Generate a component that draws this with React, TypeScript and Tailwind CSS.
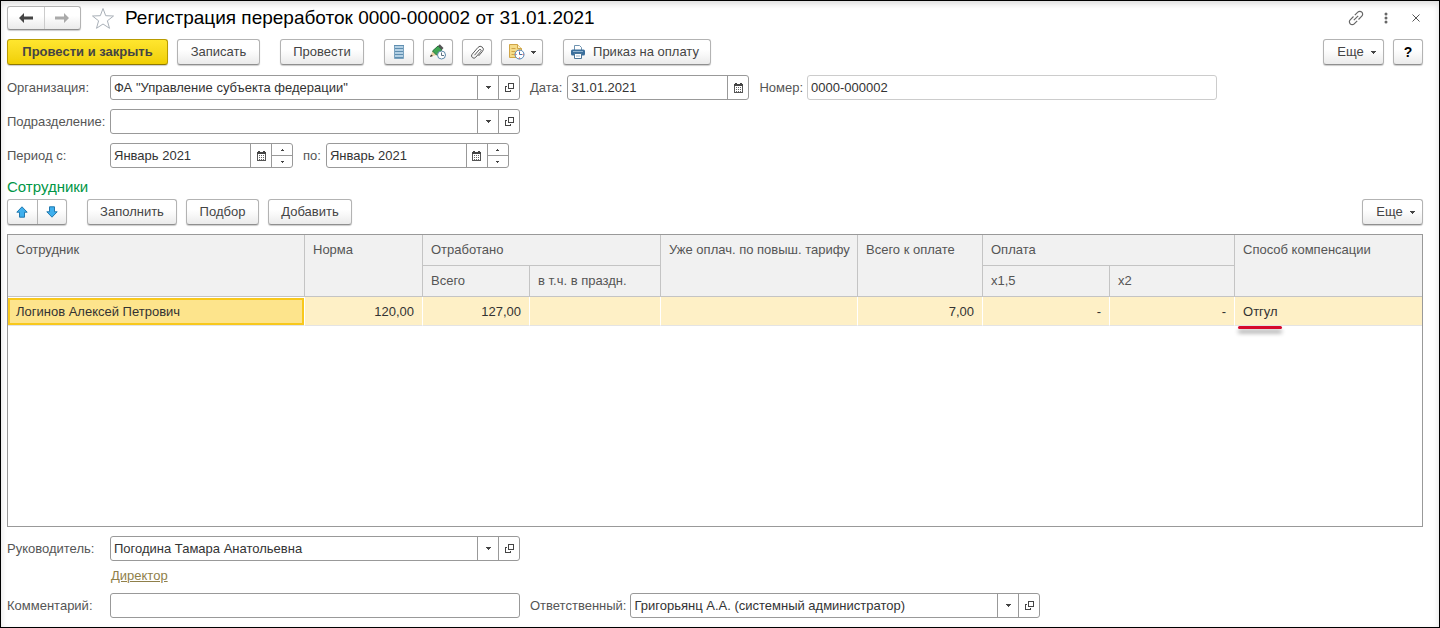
import type { ReactNode } from "react";
import clsx from "clsx";

const buttonBase =
  "flex items-center justify-center rounded-[3px] border border-[#b3b3b3] border-b-[#8f8f8f] bg-linear-to-b from-white from-40% to-[#ebebeb] text-[#444] shadow-[0_1px_1px_rgba(0,0,0,0.2)]";

const employees = [
  {
    name: "Логинов Алексей Петрович",
    norm: "120,00",
    total: "127,00",
    holidays: "",
    paid: "",
    toPay: "7,00",
    x15: "-",
    x2: "-",
    compensation: "Отгул",
  },
];

function Button({
  children,
  className,
  label,
}: {
  children: ReactNode;
  className?: string;
  label?: string;
}) {
  return (
    <button
      type="button"
      aria-label={label}
      className={clsx(buttonBase, "h-[26px] shrink-0", className)}
    >
      {children}
    </button>
  );
}

function Caret() {
  return (
    <svg width="5" height="3" viewBox="0 0 5 3" fill="#444" shapeRendering="crispEdges" aria-hidden>
      <path d="M0 0h5v1H4v1H3v1H2V2H1V1H0z" />
    </svg>
  );
}

function OpenIcon() {
  return (
    <svg
      width="9"
      height="9"
      viewBox="0 0 9 9"
      fill="none"
      stroke="#444"
      shapeRendering="crispEdges"
      aria-hidden
    >
      <path d="M3.500 .5h5v5h-5zM2 3.500H.5v5h5V7" />
    </svg>
  );
}

function CalendarIcon() {
  return (
    <svg width="9" height="10" viewBox="0 0 9 10" shapeRendering="crispEdges" aria-hidden>
      <path d="M.5 2.500h8v7h-8z" fill="#fff" stroke="#555" />
      <path d="M0 1h9v2H0zM1 0h2v1H1zM6 0h2v1H6z" fill="#444" />
      <path
        d="M2 4h1v1H2zM4 4h1v1H4zM6 4h1v1H6zM2 6h1v1H2zM4 6h1v1H4zM6 6h1v1H6zM2 8h1v1H2zM4 8h1v1H4zM6 8h1v1H6z"
        fill="#666"
      />
    </svg>
  );
}

function ArrowIcon({ className }: { className?: string }) {
  return (
    <svg width="14" height="10" viewBox="0 0 14 10" className={className} aria-hidden>
      <path d="M0 5l5-5v3.500h9v3H5V10z" fill="currentColor" />
    </svg>
  );
}

function MoveIcon({ className }: { className?: string }) {
  return (
    <svg width="12" height="12" viewBox="0 0 12 12" className={className} aria-hidden>
      <path
        d="M6 .8l5.200 5.400H8.500v5h-5v-5H.8z"
        fill="#3fb0ee"
        stroke="#2279ae"
        strokeLinejoin="round"
      />
    </svg>
  );
}

function StarIcon() {
  return (
    <svg width="24" height="23" viewBox="0 0 24 23" fill="#fff" stroke="#a9b0b8" aria-hidden>
      <path d="M12 1.500l2.700 7.200 7.800.3-6.100 4.800 2.100 7.500L12 17l-6.500 4.300 2.100-7.500L1.500 9l7.800-.3z" />
    </svg>
  );
}

function ListIcon() {
  return (
    <svg width="10" height="14" viewBox="0 0 10 14" aria-hidden>
      <path d="M.5 .5h9v13h-9z" fill="#b3d0e4" stroke="#7ba3bf" />
      <path d="M0 .5h10M1 3.500h8M1 6.500h8M1 9.500h8M1 12.500h8" stroke="#5f8eb0" />
    </svg>
  );
}

function PencilIcon() {
  return (
    <svg width="17" height="16" viewBox="0 0 17 16" aria-hidden>
      <path d="M0 13l2.500-6 4 4z" fill="#ecd3a8" />
      <path d="M0 13l1-2.600L3 12z" fill="#333" />
      <path d="M2.500 7L8 2l4 3.800L6.500 11z" fill="#3fa653" stroke="#24713a" />
      <path d="M8 2L9.800 .3l3.700 3.600L12 5.800z" fill="#555" />
      <circle cx="11.500" cy="11" r="4" fill="#fff" stroke="#5b87a8" />
      <path d="M11.500 8.500V11.500H14" fill="none" stroke="#5b7282" />
    </svg>
  );
}

function ClipIcon() {
  return (
    <svg width="14" height="15" viewBox="0 0 14 15" fill="none" stroke="#5c5c5c" aria-hidden>
      <path d="M4.500 10.200l4.700-5.400a1.100 1.100 0 0 1 1.700 1.500l-5.200 6a2.300 2.300 0 0 1-3.600-3l5.900-6.900a3 3 0 0 1 4.600 3.900L8.500 11" />
    </svg>
  );
}

function ScheduleIcon() {
  return (
    <svg width="16" height="16" viewBox="0 0 16 16" aria-hidden>
      <path d="M.5 .5h8l4 4v9H.5z" fill="#f5dc8a" stroke="#d0a548" />
      <path d="M8.500 .5v4h4" fill="#fff3c9" stroke="#d0a548" />
      <path d="M2.500 4.500h4M2.500 7.500h4M2.500 10.500h3" stroke="#d0a548" />
      <circle cx="10.500" cy="10.500" r="4.500" fill="#fff" stroke="#4a80b4" />
      <path d="M10.500 8v2.500H13" fill="none" stroke="#3f74a8" />
      <path d="M10.500 6.500v1M10.500 13.500v1M6.500 10.500h1M13.500 10.500h1" stroke="#d43b3b" />
    </svg>
  );
}

function PrinterIcon() {
  return (
    <svg width="14" height="14" viewBox="0 0 14 14" aria-hidden>
      <path d="M3.500 5V.5h5l2 2V5" fill="#fff" stroke="#6f93b0" />
      <rect x="0" y="4.500" width="14" height="6" rx="1.500" fill="#3b6f9c" />
      <path d="M2 6.500h10" stroke="#8fb3cf" />
      <path d="M3.500 8.500h7v5h-7z" fill="#fff" stroke="#4c7698" />
      <path d="M5 11h4" stroke="#9cb6ca" />
    </svg>
  );
}

function LinkIcon() {
  return (
    <svg width="16" height="16" viewBox="0 0 16 16" fill="none" stroke="#666" strokeWidth="1.200" aria-hidden>
      <path d="M6.800 5.200l3-3a2.800 2.800 0 0 1 4 4l-3.300 3.300" />
      <path d="M9.200 10.800l-3 3a2.800 2.800 0 0 1-4-4l3.300-3.300" />
      <path d="M5.800 10.200l4.400-4.400" />
    </svg>
  );
}

function Field({
  id,
  value,
  className,
  controls = [],
  readOnly,
}: {
  id: string;
  value: string;
  className: string;
  controls?: ("list" | "open" | "calendar" | "spin")[];
  readOnly?: boolean;
}) {
  const part = "flex w-[21px] shrink-0 items-center justify-center border-l border-[#999]";

  return (
    <div
      className={clsx(
        "flex h-[25px] overflow-hidden rounded-[3px] border bg-white",
        readOnly ? "border-[#ccc]" : "border-[#999]",
        className,
      )}
    >
      <input
        id={id}
        type="text"
        defaultValue={value}
        readOnly={readOnly}
        className="min-w-0 flex-1 px-[3px] text-[#333] outline-none"
      />
      {controls.map((control) => {
        if (control === "spin") {
          return (
            <span key={control} className="flex w-[21px] shrink-0 flex-col border-l border-[#999]">
              <button
                type="button"
                aria-label="Увеличить"
                className="flex flex-1 items-center justify-center border-b border-[#999]"
              >
                <svg width="3" height="2" viewBox="0 0 3 2" fill="#444" aria-hidden>
                  <path d="M0 2V1h1V0h1v1h1v1z" />
                </svg>
              </button>
              <button
                type="button"
                aria-label="Уменьшить"
                className="flex flex-1 items-center justify-center"
              >
                <svg width="3" height="2" viewBox="0 0 3 2" fill="#444" aria-hidden>
                  <path d="M0 0v1h1v1h1V1h1V0z" />
                </svg>
              </button>
            </span>
          );
        }
        return (
          <button
            key={control}
            type="button"
            aria-label={
              control === "list" ? "Выбрать из списка" : control === "open" ? "Открыть" : "Календарь"
            }
            className={part}
          >
            {control === "list" && <Caret />}
            {control === "open" && <OpenIcon />}
            {control === "calendar" && <CalendarIcon />}
          </button>
        );
      })}
    </div>
  );
}

function Label({ id, children, wide }: { id: string; children: string; wide?: boolean }) {
  return (
    <label htmlFor={id} className={clsx("shrink-0 text-[#555]", wide && "w-[103px]")}>
      {children}
    </label>
  );
}

function TitleBar() {
  return (
    <header className="flex h-6 items-center">
      <div className={clsx(buttonBase, "h-6 w-[74px]")}>
        <button
          type="button"
          aria-label="Назад"
          className="flex h-full flex-1 items-center justify-center border-r border-[#ccc]"
        >
          <ArrowIcon className="text-[#444]" />
        </button>
        <button
          type="button"
          aria-label="Вперед"
          className="flex h-full flex-1 items-center justify-center"
        >
          <ArrowIcon className="rotate-180 text-[#aaa]" />
        </button>
      </div>
      <button type="button" aria-label="В избранное" className="ml-[10px]">
        <StarIcon />
      </button>
      <h1 className="ml-[10px] flex-1 text-[19px] leading-6 text-black">
        Регистрация переработок 0000-000002 от 31.01.2021
      </h1>
      <button type="button" aria-label="Получить ссылку" className="mr-5">
        <LinkIcon />
      </button>
      <button type="button" aria-label="Действия" className="mr-6">
        <svg width="4" height="12" viewBox="0 0 4 12" fill="#666" aria-hidden>
          <circle cx="2" cy="2" r="1.500" />
          <circle cx="2" cy="6" r="1.500" />
          <circle cx="2" cy="10" r="1.500" />
        </svg>
      </button>
      <button type="button" aria-label="Закрыть" className="mr-[3px]">
        <svg width="8" height="8" viewBox="0 0 8 8" stroke="#555" aria-hidden>
          <path d="M.5 .5l7 7M7.500 .5l-7 7" />
        </svg>
      </button>
    </header>
  );
}

function CommandBar() {
  return (
    <div className="mt-[9px] flex items-center">
      <button
        type="button"
        className="h-[26px] w-[161px] rounded-[3px] border border-[#b89b00] border-b-[#8f7800] bg-linear-to-b from-[#ffe62e] to-[#f0cf00] font-bold text-[#444] shadow-[0_1px_1px_rgba(0,0,0,0.2)]"
      >
        Провести и закрыть
      </button>
      <Button className="ml-[9px] w-[83px]">Записать</Button>
      <Button className="ml-5 w-[84px]">Провести</Button>
      <Button className="ml-5 w-[30px]" label="Движения документа">
        <ListIcon />
      </Button>
      <Button className="ml-[9px] w-[30px]" label="Исправить">
        <PencilIcon />
      </Button>
      <Button className="ml-[9px] w-[30px]" label="Присоединенные файлы">
        <ClipIcon />
      </Button>
      <Button className="ml-[9px] w-[42px] gap-[6px]" label="Запланировать">
        <ScheduleIcon />
        <Caret />
      </Button>
      <Button className="ml-5 w-[148px] gap-2 pr-1">
        <PrinterIcon />
        Приказ на оплату
      </Button>
      <Button className="ml-auto w-[61px] gap-[7px] pl-[6px]">
        Еще
        <Caret />
      </Button>
      <Button className="ml-[9px] w-[30px] text-sm font-bold text-black" label="Справка">
        ?
      </Button>
    </div>
  );
}

function EmployeesTable() {
  const head = "border-[#c4c4c4] px-2 pt-[7px] text-left align-top font-normal";
  const cell = "border-r border-r-white border-b border-b-[#e4e4e4] px-2 pt-[2px] text-right";

  return (
    <div className="mt-[9px] flex-1 border border-[#999]">
      <table className="w-full table-fixed border-separate border-spacing-0">
        <colgroup>
          <col className="w-[297px]" />
          <col className="w-[118px]" />
          <col className="w-[107px]" />
          <col className="w-[131px]" />
          <col className="w-[197px]" />
          <col className="w-[125px]" />
          <col className="w-[127px]" />
          <col className="w-[125px]" />
          <col />
        </colgroup>
        <thead className="bg-[#f1f1f1] whitespace-nowrap text-[#555]">
          <tr className="h-[31px]">
            <th rowSpan={2} className={clsx(head, "border-r border-b")}>Сотрудник</th>
            <th rowSpan={2} className={clsx(head, "border-r border-b")}>Норма</th>
            <th colSpan={2} className={clsx(head, "border-r border-b")}>Отработано</th>
            <th rowSpan={2} className={clsx(head, "border-r border-b")}>
              Уже оплач. по повыш. тарифу
            </th>
            <th rowSpan={2} className={clsx(head, "border-r border-b")}>Всего к оплате</th>
            <th colSpan={2} className={clsx(head, "border-r border-b")}>Оплата</th>
            <th rowSpan={2} className={clsx(head, "border-b")}>Способ компенсации</th>
          </tr>
          <tr className="h-[31px]">
            <th className={clsx(head, "border-r border-b")}>Всего</th>
            <th className={clsx(head, "border-r border-b")}>в т.ч. в праздн.</th>
            <th className={clsx(head, "border-r border-b")}>х1,5</th>
            <th className={clsx(head, "border-r border-b")}>х2</th>
          </tr>
        </thead>
        <tbody className="text-[#333]">
          {employees.map((row) => (
            <tr key={row.name} className="h-[29px] bg-[#fef0c6]">
              <td className="border-r border-b border-r-white border-b-[#e4e4e4] bg-white p-0 pt-px">
                <div className="flex h-[27px] items-center border-2 border-[#f8c81c] bg-[#fde48c] px-[6px]">
                  {row.name}
                </div>
              </td>
              <td className={cell}>{row.norm}</td>
              <td className={cell}>{row.total}</td>
              <td className={cell}>{row.holidays}</td>
              <td className={cell}>{row.paid}</td>
              <td className={cell}>{row.toPay}</td>
              <td className={cell}>{row.x15}</td>
              <td className={cell}>{row.x2}</td>
              <td className="border-b border-[#e4e4e4] px-2 pt-[2px]">
                <span className="relative">
                  {row.compensation}
                  <span className="absolute top-[22px] -left-[5px] h-[3px] w-11 rounded-full bg-[#d6092c] shadow-[0_4px_4px_rgba(0,0,0,0.4)]" />
                </span>
              </td>
            </tr>
          ))}
        </tbody>
      </table>
    </div>
  );
}

export default function App() {
  return (
    <main className="flex min-h-screen flex-col border border-black bg-white pt-[5px] pr-4 pb-[9px] pl-[6px] font-['Liberation_Sans',Arial,sans-serif] text-[13px] leading-4 shadow-[inset_0_3px_6px_rgba(0,0,0,0.14)]">
      <TitleBar />
      <CommandBar />

      <div className="mt-[10px] flex items-center">
        <Label id="organization" wide>Организация:</Label>
        <Field
          id="organization"
          value={'ФА "Управление субъекта федерации"'}
          className="w-[410px]"
          controls={["list", "open"]}
        />
        <div className="ml-[10px] flex items-center gap-[5px]">
          <Label id="date">Дата:</Label>
          <Field id="date" value="31.01.2021" className="w-[182px]" controls={["calendar"]} />
        </div>
        <div className="ml-[10px] flex items-center gap-1">
          <Label id="number">Номер:</Label>
          <Field id="number" value="0000-000002" className="w-[410px]" readOnly />
        </div>
      </div>

      <div className="mt-[9px] flex items-center">
        <Label id="department" wide>Подразделение:</Label>
        <Field id="department" value="" className="w-[410px]" controls={["list", "open"]} />
      </div>

      <div className="mt-[9px] flex items-center">
        <Label id="period-from" wide>Период с:</Label>
        <Field
          id="period-from"
          value="Январь 2021"
          className="w-[183px]"
          controls={["calendar", "spin"]}
        />
        <div className="ml-[10px] flex items-center gap-[5px]">
          <Label id="period-to">по:</Label>
          <Field
            id="period-to"
            value="Январь 2021"
            className="w-[183px]"
            controls={["calendar", "spin"]}
          />
        </div>
      </div>

      <h2 className="mt-[9px] text-[15px] leading-5 text-[#009646]">Сотрудники</h2>

      <div className="mt-[2px] flex items-center">
        <div className={clsx(buttonBase, "h-[26px] w-[60px]")}>
          <button
            type="button"
            aria-label="Переместить вверх"
            className="flex h-full flex-1 items-center justify-center border-r border-[#b3b3b3]"
          >
            <MoveIcon />
          </button>
          <button
            type="button"
            aria-label="Переместить вниз"
            className="flex h-full flex-1 items-center justify-center"
          >
            <MoveIcon className="rotate-180" />
          </button>
        </div>
        <Button className="ml-5 w-[90px]">Заполнить</Button>
        <Button className="ml-[9px] w-[73px]">Подбор</Button>
        <Button className="ml-[9px] w-[84px]">Добавить</Button>
        <Button className="ml-auto w-[61px] gap-[7px] pl-[6px]">
          Еще
          <Caret />
        </Button>
      </div>

      <EmployeesTable />

      <div className="mt-[9px] flex items-center">
        <Label id="manager" wide>Руководитель:</Label>
        <Field
          id="manager"
          value="Погодина Тамара Анатольевна"
          className="w-[410px]"
          controls={["list", "open"]}
        />
      </div>
      <a href="#" className="mt-[7px] ml-[104px] self-start text-[#8f7f4a] underline">
        Директор
      </a>
      <div className="mt-[9px] flex items-center">
        <Label id="comment" wide>Комментарий:</Label>
        <Field id="comment" value="" className="w-[410px]" />
        <div className="ml-[10px] flex items-center gap-1">
          <Label id="responsible">Ответственный:</Label>
          <Field
            id="responsible"
            value="Григорьянц А.А. (системный администратор)"
            className="w-[410px]"
            controls={["list", "open"]}
          />
        </div>
      </div>
    </main>
  );
}
